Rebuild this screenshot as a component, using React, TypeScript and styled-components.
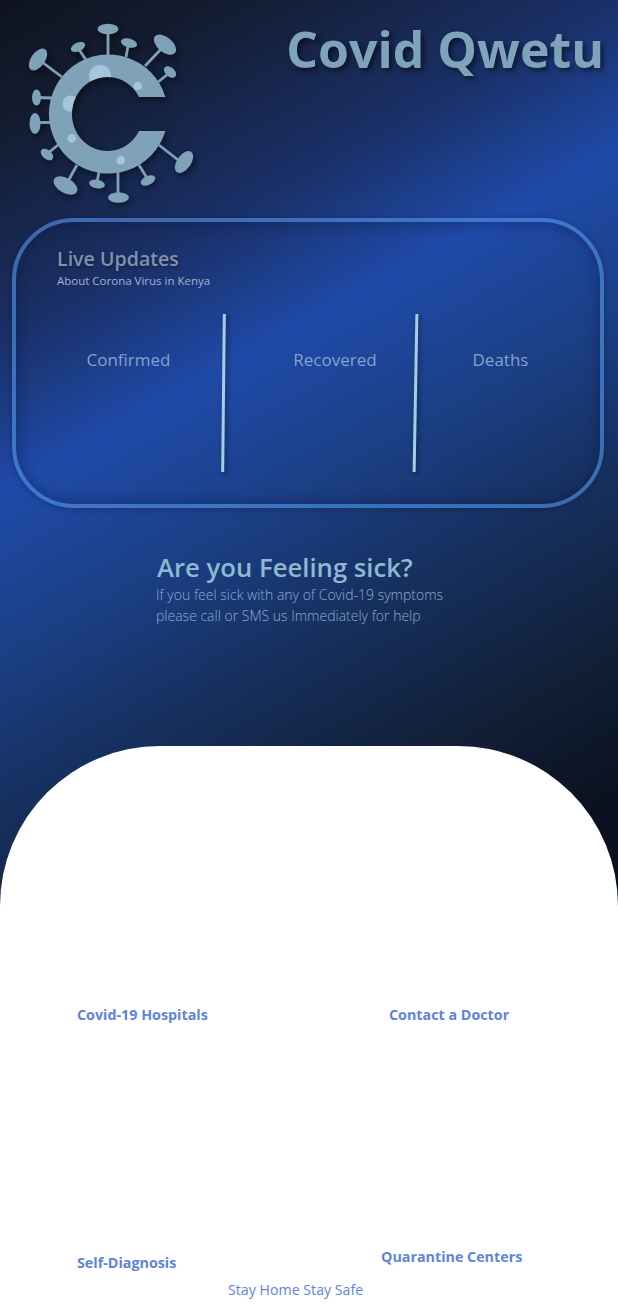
import styled, { createGlobalStyle } from "styled-components";

const GlobalStyle = createGlobalStyle`
html, body {
    margin: 0;
    padding: 0;
    background: #fff;
}
* {
    box-sizing: border-box;
}
`;

const Page = styled.div`
width: 618px;
height: 1305px;
overflow: hidden;
font-family: "Open Sans", "Noto Sans", sans-serif;
background: linear-gradient(151deg, #0e131f 0%, #131c30 10%, #1a3068 27%, #1f4aa8 39%, #1c4088 51%, #16305f 64%, #122038 78%, #0b1120 90%, #0b1120 100%) no-repeat;
background-size: 618px 920px;
display: flex;
flex-direction: column;
`;

const Header = styled.header`
height: 218px;
display: flex;
justify-content: space-between;
align-items: flex-start;
flex-shrink: 0;
`;

const Logo = styled.svg`
width: 220px;
height: 218px;
filter: drop-shadow(2px 3px 3px rgba(0, 0, 0, 0.45));
`;

const Title = styled.h1`
margin: 17px 14px 0 0;
font-size: 50px;
line-height: 64px;
font-weight: 700;
color: #7ea3ba;
white-space: nowrap;
text-shadow: 3px 3px 5px rgba(0, 0, 0, 0.5);
`;

const LiveCard = styled.section`
width: 592px;
height: 290px;
margin-left: 12px;
flex-shrink: 0;
padding: 24px 0 0 41px;
border: 4px solid rgba(85, 150, 235, 0.6);
border-radius: 62px;
box-shadow: inset 0 0 14px rgba(10, 20, 60, 0.45), 0 1px 6px rgba(10, 20, 60, 0.35);
display: flex;
flex-direction: column;
`;

const LiveTitle = styled.h2`
margin: 0;
font-size: 19.6px;
line-height: 26px;
font-weight: 600;
color: #8192ae;
text-shadow: 1px 2px 3px rgba(0, 0, 0, 0.3);
`;

const LiveSub = styled.p`
margin: 1px 0 0;
font-size: 11.5px;
line-height: 16px;
color: #a3b4cf;
`;

const StatRow = styled.div`
height: 158px;
margin: 25px 0 0 -24px;
display: flex;
`;

const Stat = styled.div<{ $width: number; $shift?: number }>`
width: ${(p) => p.$width}px;
padding: 34px 0 0 ${(p) => p.$shift ?? 0}px;
text-align: center;
font-size: 17px;
line-height: 24px;
color: #85a1d0;
`;

const Divider = styled.div<{ $tilt: number }>`
width: 3px;
height: 158px;
flex-shrink: 0;
background: #a5cfe0;
transform: rotate(${(p) => p.$tilt}deg);
box-shadow: 2px 2px 5px rgba(0, 0, 0, 0.4);
`;

const Sick = styled.section`
margin: 43px 0 0 156px;
flex-shrink: 0;
`;

const SickTitle = styled.h2`
margin: 0 0 0 1px;
font-size: 25.7px;
line-height: 33px;
font-weight: 600;
color: #8fb9d2;
`;

const SickText = styled.p`
margin: 0;
font-size: 14px;
line-height: 21px;
font-weight: 300;
color: #8aaecb;
`;

const Sheet = styled.section`
flex: 1;
margin-top: 120px;
background: #fff;
border-radius: 160px 160px 0 0;
display: flex;
flex-direction: column;
`;

const TileGrid = styled.div`
display: grid;
grid-template-columns: 309px 309px;
grid-template-rows: 279px 248px;
`;

const Tile = styled.div<{ $left: number; $lift?: number }>`
display: flex;
align-items: flex-end;
padding: 0 0 ${(p) => p.$lift ?? 0}px ${(p) => p.$left}px;
`;

const TileLabel = styled.span`
font-size: 14.3px;
line-height: 20px;
font-weight: 700;
color: #5f84d8;
white-space: nowrap;
`;

const Footer = styled.p`
margin: 7px 0 0 228px;
font-size: 14.2px;
line-height: 20px;
color: #5f84d8;
white-space: nowrap;
`;

const spikes = [
    { x1: 108, y1: 56, x2: 108, y2: 32, cx: 108, cy: 29, rx: 10.5, ry: 5.2, rot: 0 },
    { x1: 126, y1: 57, x2: 128, y2: 46, cx: 129, cy: 43, rx: 8.3, ry: 4.4, rot: 15 },
    { x1: 145, y1: 66, x2: 163, y2: 47, cx: 165, cy: 44.7, rx: 13, ry: 7.5, rot: 40 },
    { x1: 158, y1: 82, x2: 168, y2: 74, cx: 170, cy: 72, rx: 7, ry: 4.6, rot: 40 },
    { x1: 159, y1: 145, x2: 182, y2: 163, cx: 184, cy: 162, rx: 12.4, ry: 7, rot: -55 },
    { x1: 139, y1: 165, x2: 147, y2: 178, cx: 148, cy: 180.5, rx: 7.8, ry: 4.4, rot: -25 },
    { x1: 118, y1: 172, x2: 118, y2: 195, cx: 118.5, cy: 197.5, rx: 10.5, ry: 5.2, rot: 0 },
    { x1: 99, y1: 172, x2: 97, y2: 182, cx: 97, cy: 184, rx: 8, ry: 4.4, rot: 10 },
    { x1: 77, y1: 165, x2: 67, y2: 183, cx: 65.5, cy: 185.5, rx: 13, ry: 7.5, rot: 30 },
    { x1: 58, y1: 145, x2: 48, y2: 153, cx: 47, cy: 154.5, rx: 7.2, ry: 4.6, rot: 40 },
    { x1: 50, y1: 122.5, x2: 37, y2: 122.5, cx: 35, cy: 123.5, rx: 5.5, ry: 10.5, rot: 0 },
    { x1: 52, y1: 98, x2: 38, y2: 97.5, cx: 36.5, cy: 97.5, rx: 4.5, ry: 8, rot: 0 },
    { x1: 62, y1: 77, x2: 42, y2: 62, cx: 38, cy: 59.5, rx: 12.4, ry: 7, rot: -55 },
    { x1: 86, y1: 60, x2: 78, y2: 48, cx: 78, cy: 47, rx: 7.6, ry: 4.4, rot: -25 },
];

const ringPath = "M165.4 97 A59.5 59.5 0 1 0 165.4 131 L139 131 A35.5 37 0 1 1 139 97 Z";

const VirusLogo: React.FC = () => {
    return (
        <Logo viewBox="0 0 220 218">
            <defs>
                <clipPath id="ring">
                    <path d={ringPath} />
                </clipPath>
            </defs>
            {spikes.map((s, i) => (
                <g key={i}>
                    <line x1={s.x1} y1={s.y1} x2={s.x2} y2={s.y2} stroke="#7fa2b8" strokeWidth="2.8" />
                    <ellipse cx={s.cx} cy={s.cy} rx={s.rx} ry={s.ry} fill="#7fa2b8" transform={`rotate(${s.rot} ${s.cx} ${s.cy})`} />
                </g>
            ))}
            <path d={ringPath} fill="#7fa2b8" />
            <g clipPath="url(#ring)" fill="#a3c6da">
                <circle cx="100" cy="76" r="11" />
                <circle cx="70.5" cy="103.5" r="8" />
                <circle cx="137.7" cy="86" r="4.3" />
                <circle cx="71.7" cy="138.3" r="4.3" />
                <circle cx="120.7" cy="160.3" r="4.3" />
            </g>
        </Logo>
    );
};

const App: React.FC = () => {
    return (
        <Page>
            <GlobalStyle />
            <Header>
                <VirusLogo />
                <Title>Covid Qwetu</Title>
            </Header>
            <LiveCard>
                <LiveTitle>Live Updates</LiveTitle>
                <LiveSub>About Corona Virus in Kenya</LiveSub>
                <StatRow>
                    <Stat $width={189} $shift={2}>Confirmed</Stat>
                    <Divider $tilt={0.6} />
                    <Stat $width={189} $shift={31}>Recovered</Stat>
                    <Divider $tilt={1} />
                    <Stat $width={165} $shift={2}>Deaths</Stat>
                </StatRow>
            </LiveCard>
            <Sick>
                <SickTitle>Are you Feeling sick?</SickTitle>
                <SickText>If you feel sick with any of Covid-19 symptoms</SickText>
                <SickText>please call or SMS us Immediately for help</SickText>
            </Sick>
            <Sheet>
                <TileGrid>
                    <Tile $left={77}><TileLabel>Covid-19 Hospitals</TileLabel></Tile>
                    <Tile $left={80}><TileLabel>Contact a Doctor</TileLabel></Tile>
                    <Tile $left={77}><TileLabel>Self-Diagnosis</TileLabel></Tile>
                    <Tile $left={72} $lift={6}><TileLabel>Quarantine Centers</TileLabel></Tile>
                </TileGrid>
                <Footer>Stay Home Stay Safe</Footer>
            </Sheet>
        </Page>
    );
};

export default App;
